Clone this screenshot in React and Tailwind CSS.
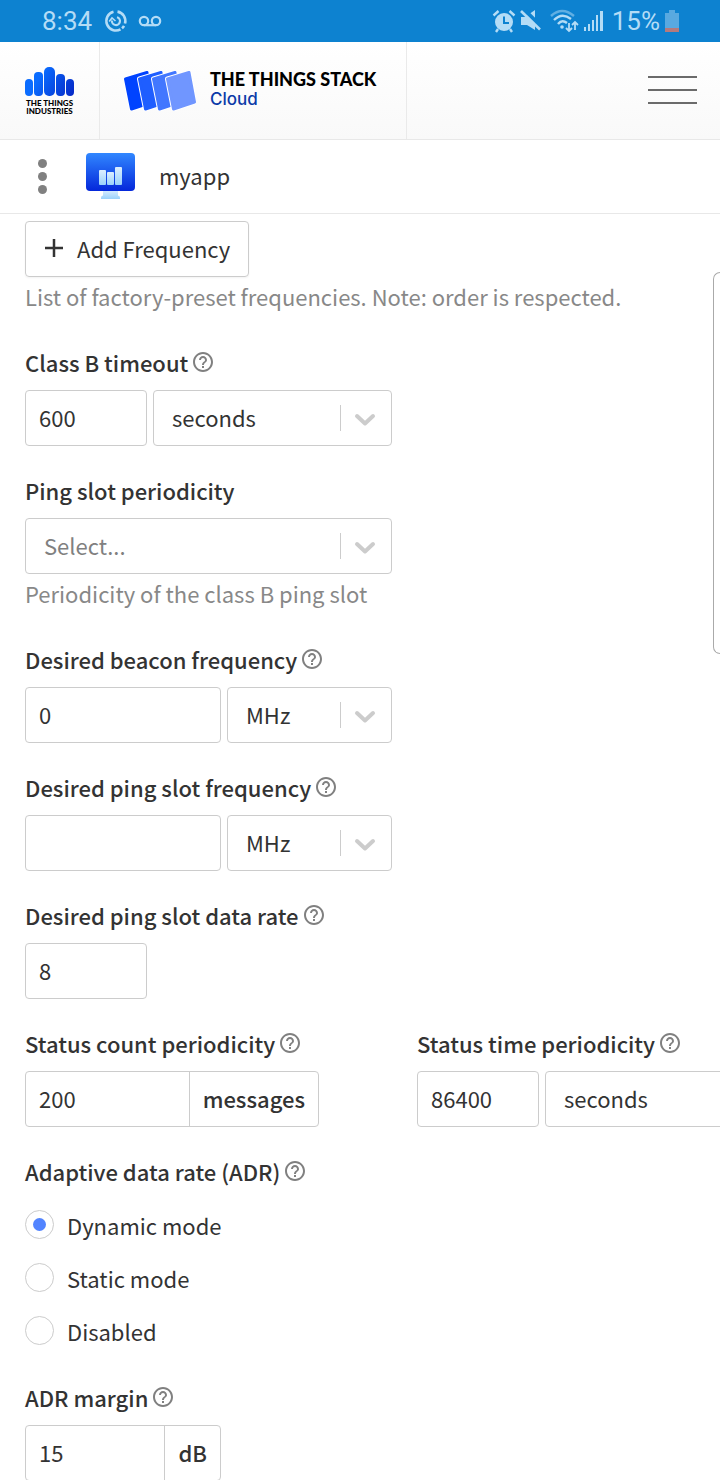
import React, { useState } from 'react';

const ADR_MODES = ['Dynamic mode', 'Static mode', 'Disabled'];

const HelpIcon = () => (
    <svg className="size-6 shrink-0" viewBox="0 0 24 24" fill="#808080" aria-hidden="true">
        <path d="M11 18h2v-2h-2v2zm1-16C6.48 2 2 6.48 2 12s4.48 10 10 10 10-4.48 10-10S17.52 2 12 2zm0 18c-4.41 0-8-3.59-8-8s3.59-8 8-8 8 3.59 8 8-3.59 8-8 8zm0-14c-2.21 0-4 1.79-4 4h2c0-1.1.9-2 2-2s2 .9 2 2c0 2-3 1.75-3 5h2c0-2.25 3-2.5 3-5 0-2.21-1.79-4-4-4z" />
    </svg>
);

const Field = ({ label, id, help, description, children }) => (
    <div>
        <div className="mb-4 flex items-center gap-[3px]">
            <label htmlFor={id} className="whitespace-nowrap leading-6 font-medium">
                {label}
            </label>
            {help && <HelpIcon />}
        </div>
        <div className="flex gap-1.5">{children}</div>
        {description && <Description>{description}</Description>}
    </div>
);

const Description = ({ children }) => (
    <p className="mt-[7px] mb-2.5 leading-6 text-[#888888]">{children}</p>
);

const TextInput = ({ className, ...rest }) => (
    <input
        {...rest}
        className={`h-14 rounded border border-[#cccccc] bg-white px-[13px] pb-0.5 outline-none ${className}`}
    />
);

const Select = ({ className, options, placeholder, ...rest }) => (
    <div className={`relative shrink-0 ${className}`}>
        <select
            {...rest}
            className={`h-14 w-full appearance-none rounded border border-[#cccccc] bg-white pr-14 pb-0.5 pl-[18px] outline-none ${placeholder ? 'text-[#808080]' : ''}`}
        >
            {placeholder && <option value="">{placeholder}</option>}
            {options.map((o) => (
                <option key={o} value={o}>{o}</option>
            ))}
        </select>
        <div className="pointer-events-none absolute inset-y-0 right-0 flex w-[52px] items-center">
            <span className="h-[26px] w-px bg-[#cccccc]" />
            <svg className="mt-1 ml-3" width="24" height="16" viewBox="0 0 24 16" fill="none" stroke="#cccccc" strokeWidth="4" strokeLinecap="round" strokeLinejoin="round">
                <path d="M4 4l8 7.500 8-7.500" />
            </svg>
        </div>
    </div>
);

const AppendedInput = ({ unit, className, ...rest }) => (
    <div className={`flex h-14 rounded border border-[#cccccc] bg-white ${className}`}>
        <input {...rest} className="min-w-0 flex-1 bg-transparent px-[13px] pb-0.5 outline-none" />
        <span className="flex items-center border-l border-[#cccccc] px-[13px] pb-0.5 font-medium">{unit}</span>
    </div>
);

const StatusBar = () => (
    <div className="flex h-[42px] shrink-0 items-center bg-[#0d82d0] pr-10 pl-[42px] font-[Roboto,sans-serif] text-[26px] leading-none text-[#b4dcf6]">
        <span>8:34</span>
        <svg className="ml-3" width="24" height="24" viewBox="0 0 24 24" fill="none" stroke="currentColor" strokeWidth="2.600">
            <path d="M9.500 2.800A9.500 9.500 0 1 0 16.500 20.300M13.500 2.600A9.500 9.500 0 0 1 21 14.500M20 16.800A9.500 9.500 0 0 1 18 19.300" />
            <path d="M8 11.500A4 4 0 1 0 13 8.200" strokeWidth="2.200" />
            <path d="M5.200 12.500l2.800-3.500 3.500 3" strokeWidth="1.600" />
        </svg>
        <svg className="ml-2.5" width="26" height="14" viewBox="0 0 26 14" fill="none" stroke="currentColor" strokeWidth="2.200">
            <circle cx="6" cy="7" r="4.200" />
            <circle cx="18" cy="7" r="4.200" />
            <path d="M6 11.200h12" />
        </svg>
        <div className="ml-auto flex items-center">
            <svg width="24" height="24" viewBox="0 0 24 24">
                <circle cx="12" cy="13" r="9" fill="currentColor" />
                <path d="M1.500 6.500l5-4.500M22.500 6.500l-5-4.500M6 20l-2 3M18 20l2 3" stroke="currentColor" strokeWidth="2.400" />
                <path d="M12 7.500V14h5" fill="none" stroke="#0d82d0" strokeWidth="2" />
            </svg>
            <svg className="ml-1" width="22" height="24" viewBox="0 0 22 24">
                <path d="M1 8h4l10-7v20l-8-5H1z" fill="currentColor" />
                <path d="M3 -.500l19 19" stroke="#0d82d0" strokeWidth="4" />
                <path d="M1 2l19 18.500" stroke="currentColor" strokeWidth="2.600" />
            </svg>
            <svg className="ml-2" width="30" height="24" viewBox="0 0 30 24" fill="none" stroke="currentColor" strokeWidth="2.400">
                <path d="M1 7Q12 -3 24 7" opacity=".5" />
                <path d="M4 11Q12 3 21 10M8 15Q12 10 17 14" />
                <circle cx="12" cy="18" r="1.800" fill="currentColor" stroke="none" />
                <path d="M19 14v8M16 19l3 3 3-3M25 21v-8M22 16l3-3 3 3" strokeWidth="1.800" />
            </svg>
            <svg className="ml-1" width="20" height="22" viewBox="0 0 20 22" fill="currentColor">
                <path d="M0 17h2v4H0zM4 14h2v7H4zM8 10h2v11H8zM12 5h2v16h-2zM16 1h3v20h-3z" />
            </svg>
            <span className="ml-2">15%</span>
            <svg className="ml-1" width="16" height="24" viewBox="0 0 16 24">
                <path d="M5 1h6v3h4v19H1V4h4z" fill="#59a9e0" />
                <path d="M1 19h14v4H1z" fill="#b57a7c" />
            </svg>
        </div>
    </div>
);

const Header = () => (
    <header className="flex h-[98px] shrink-0 border-b border-[#e8e8e8] bg-linear-to-b from-white to-[#f9f9f9]">
        <a href="#home" className="flex w-[100px] flex-col items-center justify-center border-r border-[#eaeaea]" aria-label="The Things Industries">
            <svg width="50" height="29" viewBox="0 0 50 29">
                <defs>
                    <linearGradient id="bars" x1="0" y1="0" x2="50" y2="29" gradientUnits="userSpaceOnUse">
                        <stop offset=".3" stopColor="#0a6cff" />
                        <stop offset="1" stopColor="#0526c4" />
                    </linearGradient>
                </defs>
                <g fill="url(#bars)">
                    <rect x="0" y="12" width="8" height="17" rx="4" />
                    <rect x="9" y="5" width="9" height="24" rx="4" />
                    <rect x="19" y="0" width="11" height="29" rx="5" />
                    <rect x="31" y="7" width="9" height="22" rx="4" />
                    <rect x="41" y="12" width="8" height="17" rx="4" />
                </g>
            </svg>
            <span className="mt-[3px] text-center font-[Lato,sans-serif] text-[8px] leading-[8px] font-black text-black">
                THE THINGS<br />INDUSTRIES
            </span>
        </a>
        <a href="#stack" className="flex w-[307px] items-center border-r border-[#eaeaea] pl-6">
            <svg className="shrink-0" width="72" height="40" viewBox="0 0 72 40" strokeLinejoin="round">
                {['#0043ff', '#1f5eff', '#4277ff', '#7096ff'].map((color, i) => (
                    <g key={color} transform={`translate(${i * 14} 0)`}>
                        <path d="M1.500 8L23 1.500 28.500 31 7.500 38z" fill="#fff" stroke="#fff" strokeWidth="5" />
                        <path d="M1.500 8L23 1.500 28.500 31 7.500 38z" fill={color} stroke={color} strokeWidth="3" />
                    </g>
                ))}
            </svg>
            <span className="ml-3.5 flex flex-col pb-1">
                <span className="whitespace-nowrap font-[Lato,sans-serif] text-lg leading-5 font-black text-black">THE THINGS STACK</span>
                <span className="font-[Inter,sans-serif] text-[17px] leading-5 font-medium text-[#0b3aa8]">Cloud</span>
            </span>
        </a>
        <button type="button" aria-label="Menu" className="mr-[23px] ml-auto flex w-[49px] flex-col justify-center gap-[11px] pb-0.5">
            <span className="h-0.5 w-full bg-[#6b6b6b]" />
            <span className="h-0.5 w-full bg-[#6b6b6b]" />
            <span className="h-0.5 w-full bg-[#6b6b6b]" />
        </button>
    </header>
);

const AppBar = () => (
    <div className="flex h-[74px] shrink-0 items-center border-b border-[#e8e8e8] pl-[38px]">
        <button type="button" aria-label="Open navigation" className="flex flex-col gap-1">
            <span className="size-[9px] rounded-full bg-[#808080]" />
            <span className="size-[9px] rounded-full bg-[#808080]" />
            <span className="size-[9px] rounded-full bg-[#808080]" />
        </button>
        <svg className="ml-[39px]" width="49" height="47" viewBox="0 0 49 47">
            <defs>
                <linearGradient id="screen" x1="0" y1="0" x2="0" y2="1">
                    <stop stopColor="#3187ff" />
                    <stop offset="1" stopColor="#0427da" />
                </linearGradient>
                <linearGradient id="stand" x1="0" y1="0" x2="0" y2="1">
                    <stop stopColor="#dceeff" />
                    <stop offset="1" stopColor="#9ad2fb" />
                </linearGradient>
            </defs>
            <path d="M17 37h15v5q0 1 1 1 1 0 1 2v1H15v-1q0-2 1-2 1 0 1-1z" fill="url(#stand)" />
            <rect width="49" height="38" rx="4" fill="url(#screen)" />
            <g fill="url(#stand)">
                <rect x="13" y="17" width="7" height="15" rx="1" />
                <rect x="21" y="19" width="7" height="13" rx="1" />
                <rect x="29" y="14" width="7" height="18" rx="1" />
            </g>
        </svg>
        <span className="ml-6 pb-1">myapp</span>
    </div>
);

export default function App() {
    const [adr, setAdr] = useState(ADR_MODES[0]);

    return (
        <div className="relative flex h-screen flex-col overflow-hidden bg-white font-['Noto_Sans_CJK_SC',sans-serif] text-[22px] leading-7 text-[#333333]">
            <StatusBar />
            <Header />
            <AppBar />
            <form className="flex flex-col gap-8 pt-[7px] pl-[25px]">
                <div>
                    <button type="button" className="flex h-14 items-center gap-[13px] rounded border border-[#cccccc] px-[18px] pb-0.5 shadow-xs">
                        <svg width="20" height="20" viewBox="0 0 20 20" fill="none" stroke="#333333" strokeWidth="2.500">
                            <path d="M10 1v18M1 10h18" />
                        </svg>
                        Add Frequency
                    </button>
                    <Description>List of factory-preset frequencies. Note: order is respected.</Description>
                </div>

                <Field label="Class B timeout" id="timeout" help>
                    <TextInput id="timeout" defaultValue="600" className="w-[122px]" />
                    <Select aria-label="Timeout unit" options={['seconds', 'minutes']} className="w-[239px]" />
                </Field>

                <Field label="Ping slot periodicity" id="periodicity" description="Periodicity of the class B ping slot">
                    <Select id="periodicity" placeholder="Select..." options={['1 second', '2 seconds']} className="w-[367px]" />
                </Field>

                <Field label="Desired beacon frequency" id="beacon" help>
                    <TextInput id="beacon" defaultValue="0" className="w-[196px]" />
                    <Select aria-label="Beacon frequency unit" options={['MHz', 'kHz']} className="w-[165px]" />
                </Field>

                <Field label="Desired ping slot frequency" id="ping_frequency" help>
                    <TextInput id="ping_frequency" className="w-[196px]" />
                    <Select aria-label="Ping slot frequency unit" options={['MHz', 'kHz']} className="w-[165px]" />
                </Field>

                <Field label="Desired ping slot data rate" id="data_rate" help>
                    <TextInput id="data_rate" defaultValue="8" className="w-[122px]" />
                </Field>

                <div className="flex">
                    <div className="w-[392px] shrink-0">
                        <Field label="Status count periodicity" id="status_count" help>
                            <AppendedInput id="status_count" defaultValue="200" unit="messages" className="w-[294px]" />
                        </Field>
                    </div>
                    <div className="shrink-0">
                        <Field label="Status time periodicity" id="status_time" help>
                            <TextInput id="status_time" defaultValue="86400" className="w-[122px]" />
                            <Select aria-label="Status time unit" options={['seconds', 'minutes']} className="w-[239px]" />
                        </Field>
                    </div>
                </div>

                <fieldset className="mb-2">
                    <legend className="mb-[27px] flex items-center gap-[3px] leading-6 font-medium">
                        Adaptive data rate (ADR)
                        <HelpIcon />
                    </legend>
                    <div className="flex flex-col gap-6">
                        {ADR_MODES.map((mode) => (
                            <label key={mode} className="flex h-[29px] items-center gap-[13px]">
                                <input
                                    type="radio"
                                    name="adr"
                                    checked={adr === mode}
                                    onChange={() => setAdr(mode)}
                                    className="flex size-[29px] appearance-none items-center justify-center rounded-full border border-[#cccccc] before:size-[13px] before:rounded-full checked:before:bg-[#5284ff]"
                                />
                                {mode}
                            </label>
                        ))}
                    </div>
                </fieldset>

                <Field label="ADR margin" id="adr_margin" help>
                    <AppendedInput id="adr_margin" defaultValue="15" unit="dB" className="w-[196px]" />
                </Field>
            </form>

            {/* Edge panel handle, floats over the page */}
            <div className="absolute top-[272px] right-0 h-[382px] w-[7px] rounded-l-lg border border-r-0 border-[#aaaaaa] bg-white" />
        </div>
    );
}
